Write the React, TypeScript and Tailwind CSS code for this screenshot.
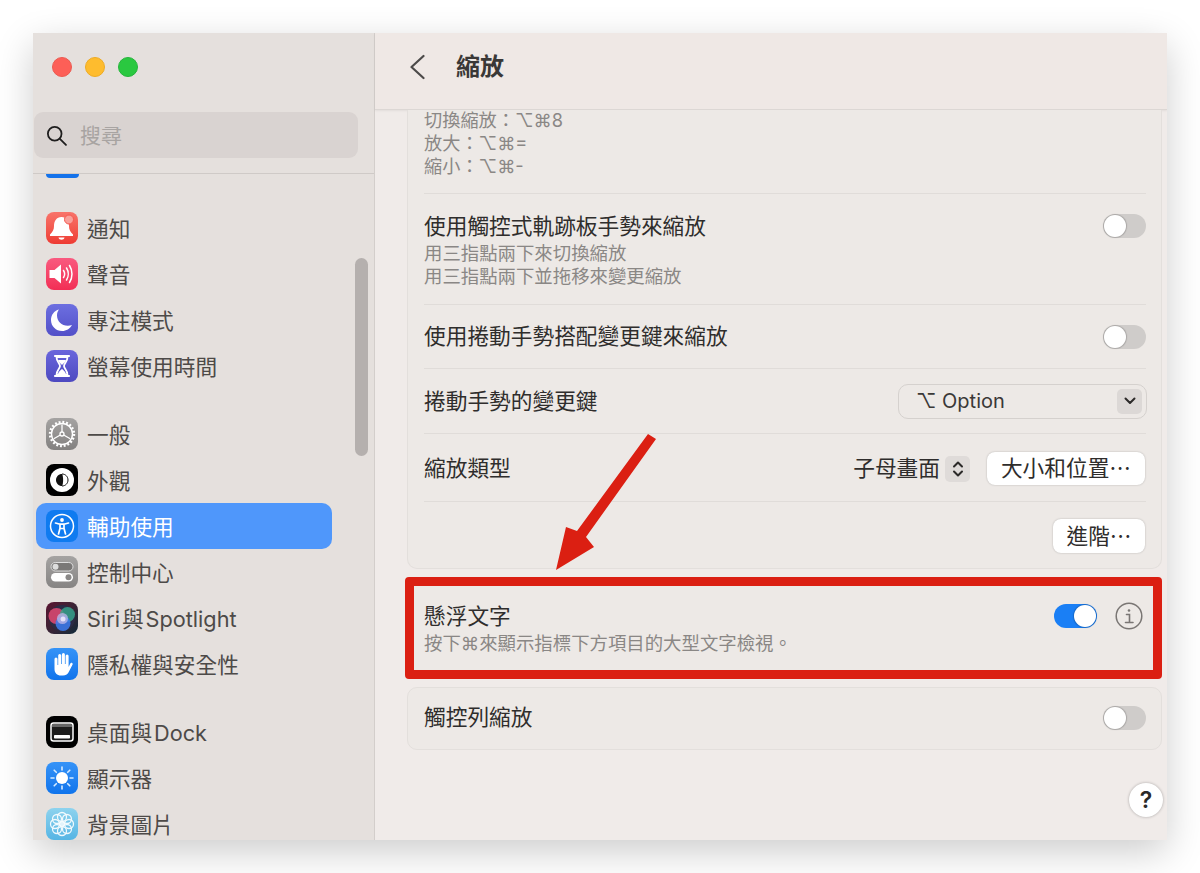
import type { ReactNode } from "react";

const FONT = "font-['Inter','Noto_Sans_CJK_TC',sans-serif]";

function Tile({ className, children }: { className: string; children: ReactNode }) {
  return (
    <div className={`h-[32px] w-[32px] shrink-0 overflow-hidden rounded-[8px] ${className}`}>
      <svg viewBox="0 0 32 32" className="h-full w-full">
        {children}
      </svg>
    </div>
  );
}

const icons: Record<string, ReactNode> = {
  bell: (
    <Tile className="bg-gradient-to-b from-[#f8736a] to-[#ee3a32]">
      <path d="M15.500 5c-5 0-7.500 4-7.500 9 0 3.500-1.200 5.500-4 8.500V24h23v-1.500c-2.800-3-4-5-4-8.500 0-5-2.500-9-7.500-9z" fill="#fff" />
      <path d="M12.500 25.500h6c-.3 1.500-1.500 2.200-3 2.200s-2.700-.7-3-2.200z" fill="#fff" />
      <circle cx="23" cy="7.500" r="4.500" fill="#f8a09a" stroke="#f4584f" strokeWidth="1" />
    </Tile>
  ),
  sound: (
    <Tile className="bg-gradient-to-b from-[#f9597f] to-[#f22d55]">
      <path d="M3.500 12h5L15 6.500v19L8.500 20h-5z" fill="#fff" />
      <path d="M17.500 12.500c1.300 2 1.300 5 0 7M20.500 10c2.300 3.500 2.300 8.500 0 12M23.500 7.500c3.300 5 3.300 12 0 17" fill="none" stroke="#fff" strokeWidth="1.500" strokeLinecap="round" />
    </Tile>
  ),
  moon: (
    <Tile className="bg-gradient-to-b from-[#6d6fe0] to-[#5350c8]">
      <path d="M13 5.500c-5 1.300-8 5.600-8 10.500 0 6.300 5 11 11 11 4.300 0 8-2.200 10-6-1.200.5-2.700.8-4.200.8-6.300 0-10.800-4.700-10.800-10.300 0-2.200.7-4.300 2-6z" fill="#fff" />
    </Tile>
  ),
  hourglass: (
    <Tile className="bg-gradient-to-b from-[#6a66dc] to-[#4d49c0]">
      <path d="M9 6h14M9 26h14" stroke="#fff" strokeWidth="2.200" strokeLinecap="round" />
      <path d="M10.500 7c0 5 3.500 6.500 3.500 9s-3.500 4-3.500 9h11c0-5-3.500-6.500-3.500-9s3.500-4 3.500-9z" fill="none" stroke="#fff" strokeWidth="1.800" />
      <path d="M12 10h8c-.6 2.500-3 3.500-4 5-1-1.500-3.400-2.500-4-5zM16 19c1 1 3.500 2.500 4 5h-8c.5-2.500 3-4 4-5z" fill="#fff" />
    </Tile>
  ),
  gear: (
    <Tile className="bg-gradient-to-b from-[#a5a3a2] to-[#838180]">
      <circle cx="16" cy="16" r="10.500" fill="none" stroke="#fff" strokeWidth="1.400" />
      <circle cx="16" cy="16" r="12" fill="none" stroke="#fff" strokeWidth="2.400" strokeDasharray="1.900 1.870" />
      <circle cx="16" cy="16" r="2" fill="none" stroke="#fff" strokeWidth="1.300" />
      <path d="M16 14V6.500M14.300 17l-6.500 3.800M17.700 17l6.500 3.800" stroke="#fff" strokeWidth="1.300" />
    </Tile>
  ),
  appearance: (
    <Tile className="bg-black">
      <circle cx="16" cy="16" r="12" fill="#fff" />
      <path d="M16 10c-3.500 0-6 2.700-6 6s2.500 6 6 6c1.500-2 1.500-10 0-12z" fill="#111" />
      <path d="M16 10c3.500 0 6 2.700 6 6s-2.500 6-6 6" fill="none" stroke="#111" strokeWidth="1" />
    </Tile>
  ),
  access: (
    <Tile className="bg-[#0f7bf0]">
      <circle cx="16" cy="16" r="11.500" fill="none" stroke="#fff" strokeWidth="1.500" />
      <circle cx="16" cy="10" r="1.900" fill="#fff" />
      <path d="M9.500 13l4.500 1.200v4L12.500 24M22.500 13L18 14.200v4L19.500 24M14 14.200h4M14.200 18.500h3.600" fill="none" stroke="#fff" strokeWidth="1.700" strokeLinecap="round" strokeLinejoin="round" />
    </Tile>
  ),
  control: (
    <Tile className="bg-gradient-to-b from-[#a5a3a2] to-[#868483]">
      <rect x="5" y="6.500" width="22" height="8.500" rx="4.250" fill="#7a7877" stroke="#ddd" strokeWidth="1" />
      <circle cx="9.500" cy="10.750" r="3" fill="#ddd" />
      <rect x="5" y="17" width="22" height="8.500" rx="4.250" fill="#fff" />
      <circle cx="22.500" cy="21.250" r="3" fill="#8a8887" />
    </Tile>
  ),
  siri: (
    <Tile className="bg-gradient-to-br from-[#5a1030] to-[#0b2a3a]">
      <circle cx="16" cy="16" r="13" fill="#2b2b45" />
      <circle cx="10.500" cy="14" r="8" fill="#d9476f" opacity="0.900" />
      <circle cx="21.500" cy="12.500" r="7.500" fill="#38a98f" opacity="0.800" />
      <circle cx="17" cy="21.500" r="7.500" fill="#3d7cf0" opacity="0.850" />
      <circle cx="16.500" cy="16.500" r="5.500" fill="#b9b4e5" opacity="0.800" />
      <circle cx="17" cy="17" r="2.500" fill="#ece8fa" opacity="0.900" />
    </Tile>
  ),
  hand: (
    <Tile className="bg-gradient-to-b from-[#3593f7] to-[#0f74ec]">
      <path d="M8.500 11a1.500 1.500 0 0 1 3 0v6h.7V7.500a1.500 1.500 0 0 1 3 0V16h.7V6.500a1.500 1.500 0 0 1 3 0V16h.7V8a1.500 1.500 0 0 1 3 0v11l1.700-3.500c.7-1.300 2.800-.5 2.300 1L23 23.500c-1 2.700-3.300 4-6 4h-2c-4 0-6.500-2.500-6.500-6.500z" fill="#fff" />
    </Tile>
  ),
  dock: (
    <Tile className="bg-black">
      <rect x="5" y="7" width="22" height="18" rx="2.500" fill="#1c1c1c" stroke="#fff" strokeWidth="1.500" />
      <rect x="6" y="8" width="20" height="3" fill="#666" />
      <rect x="8" y="19" width="16" height="3.500" rx="0.800" fill="#fff" />
    </Tile>
  ),
  sun: (
    <Tile className="bg-gradient-to-b from-[#3593f7] to-[#0f74ec]">
      <circle cx="16" cy="16" r="6" fill="#fff" />
      <path d="M16 5v3M16 24v3M5 16h3M24 16h3M8.200 8.200l2.100 2.100M21.700 21.700l2.100 2.100M8.200 23.800l2.100-2.100M21.700 10.300l2.100-2.100" stroke="#d6ebff" strokeWidth="1.600" strokeLinecap="round" />
    </Tile>
  ),
  flower: (
    <Tile className="bg-gradient-to-b from-[#8ed3ee] to-[#55b5e4]">
      <g fill="none" stroke="#fff" strokeWidth="1.300" opacity="0.900">
        <circle cx="16" cy="9" r="4.500" />
        <circle cx="21" cy="11" r="4.500" />
        <circle cx="23" cy="16" r="4.500" />
        <circle cx="21" cy="21" r="4.500" />
        <circle cx="16" cy="23" r="4.500" />
        <circle cx="11" cy="21" r="4.500" />
        <circle cx="9" cy="16" r="4.500" />
        <circle cx="11" cy="11" r="4.500" />
      </g>
      <circle cx="16" cy="16" r="2.500" fill="#fff" opacity="0.800" />
    </Tile>
  ),
};

const groups = [
  [
    { label: "通知", icon: "bell" },
    { label: "聲音", icon: "sound" },
    { label: "專注模式", icon: "moon" },
    { label: "螢幕使用時間", icon: "hourglass" },
  ],
  [
    { label: "一般", icon: "gear" },
    { label: "外觀", icon: "appearance" },
    { label: "輔助使用", icon: "access", active: true },
    { label: "控制中心", icon: "control" },
    { label: "Siri\u200A與\u200ASpotlight", icon: "siri" },
    { label: "隱私權與安全性", icon: "hand" },
  ],
  [
    { label: "桌面與\u200ADock", icon: "dock" },
    { label: "顯示器", icon: "sun" },
    { label: "背景圖片", icon: "flower" },
  ],
];

function Sidebar() {
  return (
    <aside className="flex w-[342px] shrink-0 flex-col border-r border-[#d3cecb] bg-[#e5e0dd]">
      <div className="h-[141px] shrink-0 border-b border-[#cfcac7]">
        <div className="flex gap-[13px] pl-[19px] pt-[24px]">
          <span className="h-[20px] w-[20px] rounded-full border border-[#ec5a50] bg-[#fd5f57]" />
          <span className="h-[20px] w-[20px] rounded-full border border-[#eeab23] bg-[#febc2e]" />
          <span className="h-[20px] w-[20px] rounded-full border border-[#25b53b] bg-[#2ac840]" />
        </div>
        <div className="ml-px mt-[35px] flex h-[46px] w-[324px] items-center gap-[13px] rounded-[9px] bg-[#d9d3d1] pl-[12px]">
          <svg viewBox="0 0 20 20" className="h-[21px] w-[21px]" fill="none" stroke="#1f1e1e" strokeWidth="1.700" strokeLinecap="round">
            <circle cx="8.300" cy="8.300" r="6.500" />
            <path d="M13 13l6 6" />
          </svg>
          <span className="text-[21px] leading-none text-[#a8a4a2]">搜尋</span>
        </div>
      </div>
      <div className="relative min-h-0 flex-1 overflow-hidden">
        <div className="ml-[13px] h-[4px] w-[33px] rounded-b-[7px] bg-[#1472ea]" />
        <div className="flex flex-col gap-[22px] pt-[27px]">
          {groups.map((group, i) => (
            <div key={i} className="flex flex-col">
              {group.map((item) => (
                <div
                  key={item.label}
                  className={`ml-[3px] flex h-[46px] w-[296px] shrink-0 items-center gap-[9px] rounded-[10px] pl-[10px] text-[21.700px] ${
                    "active" in item ? "bg-[#4f97fb] text-white" : "text-[#4d4a48]"
                  }`}
                >
                  {icons[item.icon]}
                  <span className="mt-[2px] whitespace-nowrap">{item.label}</span>
                </div>
              ))}
            </div>
          ))}
        </div>
        <div className="absolute left-[322px] top-[84px] h-[198px] w-[13px] rounded-full bg-[#b5b0ae]" />
      </div>
    </aside>
  );
}

function Toggle({ on }: { on?: boolean }) {
  return (
    <div className={`flex h-[24px] w-[43px] rounded-full p-px ${on ? "justify-end bg-[#1a7ff5]" : "justify-start bg-[#cfccca]"}`}>
      <div className="h-[22px] w-[22px] rounded-full bg-white shadow-[0_0_1px_1px_rgba(0,0,0,0.18)]" />
    </div>
  );
}

function Row({ height, last, className, children }: { height: string; last?: boolean; className?: string; children: ReactNode }) {
  return (
    <div className={`ml-[16px] mr-[15px] flex items-center justify-between text-[21.700px] text-[#2f2d2c] ${height} ${last ? "" : "border-b border-[#e0dcd9]"} ${className ?? ""}`}>
      {children}
    </div>
  );
}

export default function App() {
  return (
    <div className={`relative h-[873px] w-[1200px] overflow-hidden bg-white pl-[33px] pt-[33px] ${FONT}`}>
      <div className="flex h-[807px] w-[1134px] overflow-hidden shadow-[0_12px_36px_rgba(0,0,0,0.2)]">
        <Sidebar />
        <main className="relative flex min-w-0 flex-1 flex-col bg-[#f0ebe9]">
          <header className="flex h-[77px] shrink-0 items-center border-b border-[#dcd7d4] bg-[#efe8e5] pb-[8px] pl-[34px] shadow-[0_1px_2px_rgba(0,0,0,0.06)]">
            <svg viewBox="0 0 16 26" className="h-[26px] w-[16px]" fill="none" stroke="#4c4a49" strokeWidth="2.200" strokeLinecap="round" strokeLinejoin="round">
              <path d="M14.500 2L2.500 13l12 11" />
            </svg>
            <h1 className="ml-[31px] text-[24px] font-bold text-[#3a3837]">縮放</h1>
          </header>

          <div className="flex min-h-0 flex-1 flex-col pl-[32px] pr-[5px]">
            <section className="h-[459px] shrink-0 rounded-b-[10px] border-x border-b border-[#e3dfdc] bg-[#ede9e6]">
              <div className="ml-[16px] mr-[15px] h-[85px] border-b border-[#e0dcd9] text-[18.200px] leading-[23px] text-[#8a8785]">
                <div className="-mt-px whitespace-nowrap">切換縮放：⌥⌘8</div>
                <div>放大：⌥⌘=</div>
                <div>縮小：⌥⌘-</div>
              </div>
              <div className="ml-[16px] mr-[15px] h-[111px] border-b border-[#e0dcd9] pt-[16px]">
                <div className="flex items-start justify-between">
                  <div className="text-[21.700px] leading-[32px] text-[#2f2d2c]">使用觸控式軌跡板手勢來縮放</div>
                  <div className="pt-[4px]"><Toggle /></div>
                </div>
                <div className="text-[18.400px] leading-[23px] text-[#8a8785]">
                  <div>用三指點兩下來切換縮放</div>
                  <div>用三指點兩下並拖移來變更縮放</div>
                </div>
              </div>
              <Row height="h-[64px]">
                <span>使用捲動手勢搭配變更鍵來縮放</span>
                <Toggle />
              </Row>
              <Row height="h-[65px]">
                <span>捲動手勢的變更鍵</span>
                <div className="-mr-px flex h-[35px] w-[249px] items-center justify-between rounded-[10px] border border-[#d5d1ce] pl-[17px] pr-[4px] text-[20px] text-[#3a3837]">
                  <span className="font-['Inter','DejaVu_Sans',sans-serif]">⌥ Option</span>
                  <span className="flex h-[25px] w-[25px] items-center justify-center rounded-[5px] bg-[#dcd8d6]">
                    <svg viewBox="0 0 12 8" className="h-[8px] w-[12px]" fill="none" stroke="#2c2a29" strokeWidth="2" strokeLinecap="round" strokeLinejoin="round">
                      <path d="M1.500 1.500L6 6l4.500-4.500" />
                    </svg>
                  </span>
                </div>
              </Row>
              <Row height="h-[68px]" className="pt-[2px]">
                <span>縮放類型</span>
                <div className="mr-px flex items-center">
                  <span>子母畫面</span>
                  <span className="ml-[5px] flex h-[26px] w-[25px] items-center justify-center rounded-[5px] bg-[#dfdbd9]">
                    <svg viewBox="0 0 12 18" className="h-[18px] w-[12px]" fill="none" stroke="#2c2a29" strokeWidth="2" strokeLinecap="round" strokeLinejoin="round">
                      <path d="M2 6.500L6 2.500l4 4M2 11.500l4 4 4-4" />
                    </svg>
                  </span>
                  <span className="ml-[17px] flex h-[33px] w-[158px] items-center justify-center rounded-[8px] bg-white text-[#2f2d2c] shadow-[0_0_2px_rgba(0,0,0,0.25)]">大小和位置⋯</span>
                </div>
              </Row>
              <Row height="h-[66px]" last className="pt-[2px]">
                <span />
                <span className="mr-px flex h-[34px] w-[92px] items-center justify-center rounded-[8px] bg-white text-[#2f2d2c] shadow-[0_0_2px_rgba(0,0,0,0.25)]">進階⋯</span>
              </Row>
            </section>

            <section className="relative mt-[8px] h-[102px] shrink-0 rounded-[10px] bg-[#ede9e6] px-[17px] pt-[23px]">
              <div className="flex items-center justify-between">
                <div className="text-[21.700px] leading-[32px] text-[#2f2d2c]">懸浮文字</div>
                <div className="mr-[2px] flex items-center gap-[18px]">
                  <Toggle on />
                  <svg viewBox="0 0 28 28" className="h-[28px] w-[28px]" fill="none" stroke="#7a7674" strokeLinecap="round">
                    <circle cx="14" cy="14" r="12.800" strokeWidth="1.500" />
                    <circle cx="14" cy="8.500" r="1.300" fill="#7a7674" stroke="none" />
                    <path d="M11.500 12.500H14.500V20M10.500 20.500h7.500" strokeWidth="1.600" />
                  </svg>
                </div>
              </div>
              <div className="text-[18.400px] leading-[23px] text-[#8a8785]">按下⌘來顯示指標下方項目的大型文字檢視。</div>
              <div className="absolute -left-[2px] bottom-0 right-0 top-0 rounded-[4px] border-[9px] border-[#db1f12]" />
            </section>

            <section className="mt-[8px] flex h-[63px] shrink-0 items-center justify-between rounded-[10px] border border-[#e3dfdc] bg-[#ede9e6] pb-[2px] pl-[16px] pr-[15px] text-[21.700px] text-[#2f2d2c]">
              <span>觸控列縮放</span>
              <Toggle />
            </section>
          </div>

          <div className="absolute bottom-[23px] right-[4px] flex h-[34px] w-[34px] items-center justify-center rounded-full bg-white text-[23px] font-semibold text-[#2a2928] shadow-[0_0_3px_rgba(0,0,0,0.3)]">?</div>
        </main>
      </div>

      <svg viewBox="0 0 1200 873" className="pointer-events-none absolute inset-0 h-[873px] w-[1200px]">
        <path d="M648 434L656 439L586 537L594 547L556 570L566 527L577 531Z" fill="#db1f12" />
      </svg>
    </div>
  );
}
